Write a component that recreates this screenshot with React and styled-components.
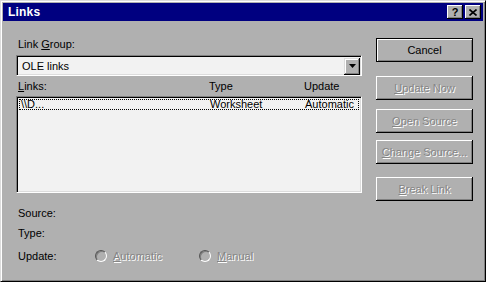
import React from "react";
import styled, { createGlobalStyle } from "styled-components";

const Global = createGlobalStyle`
	html, body {
		margin: 0;
		padding: 0;
		background: #b0b0b0;
	}
	body {
		font-family: "Liberation Sans", Arial, sans-serif;
		font-size: 11px;
		color: #000;
	}
`;

const Win = styled.div`
	width: 486px;
	height: 282px;
	box-sizing: border-box;
	background: #b0b0b0;
	border-top: 1px solid #dcdcdc;
	border-left: 1px solid #dcdcdc;
	border-right: 1px solid #000;
	border-bottom: 1px solid #000;
	box-shadow: inset 1px 1px 0 #fff, inset -1px -1px 0 #808080;
	padding: 2px;
	display: flex;
	flex-direction: column;
`;

const TitleBar = styled.div`
	height: 18px;
	background: #000080;
	display: flex;
	align-items: center;
	padding: 0 2px 0 5px;
	h1 {
		flex: 1;
		margin: 0;
		font-size: 12px;
		font-weight: bold;
		color: #fff;
		letter-spacing: 0.2px;
	}
`;

const CapBtn = styled.button`
	width: 16px;
	height: 14px;
	padding: 0;
	margin-left: ${(p) => p.$gap || 0}px;
	background: #b0b0b0;
	border: none;
	box-shadow: inset -1px -1px 0 #000, inset 1px 1px 0 #fff, inset -2px -2px 0 #808080;
	font-family: "Liberation Sans", Arial, sans-serif;
	font-size: 11px;
	font-weight: bold;
	line-height: 13px;
	display: flex;
	align-items: center;
	justify-content: center;
`;

const Body = styled.div`
	flex: 1;
	display: flex;
	padding: 17px 10px 0 13px;
	column-gap: 14px;
`;

const LeftCol = styled.div`
	width: 346px;
	display: flex;
	flex-direction: column;
`;

const Label = styled.div`
	height: 13px;
	line-height: 13px;
	margin-top: ${(p) => p.$mt || 0}px;
	padding-left: 2px;
`;

const Combo = styled.div`
	margin-top: 4px;
	height: 21px;
	box-sizing: border-box;
	background: #f2f2f2;
	border-top: 1px solid #808080;
	border-left: 1px solid #808080;
	border-right: 1px solid #fff;
	border-bottom: 1px solid #fff;
	box-shadow: inset 1px 1px 0 #000, inset -1px -1px 0 #dcdcdc;
	display: flex;
	align-items: center;
	padding: 2px 1px 1px 2px;
	span {
		flex: 1;
		padding-left: 3px;
	}
`;

const DropBtn = styled.div`
	width: 16px;
	height: 17px;
	background: #b0b0b0;
	box-shadow: inset -1px -1px 0 #000, inset 1px 1px 0 #dcdcdc, inset -2px -2px 0 #808080, inset 2px 2px 0 #fff;
	display: flex;
	align-items: center;
	justify-content: center;
`;

const Cols = styled.div`
	display: grid;
	grid-template-columns: 191px 95px 1fr;
	height: 13px;
	line-height: 13px;
	margin-top: ${(p) => p.$mt || 0}px;
	padding-left: 2px;
`;

const ListBox = styled.div`
	margin-top: 3px;
	height: 97px;
	box-sizing: border-box;
	background: #f2f2f2;
	border-top: 1px solid #808080;
	border-left: 1px solid #808080;
	border-right: 1px solid #fff;
	border-bottom: 1px solid #fff;
	box-shadow: inset 1px 1px 0 #000, inset -1px -1px 0 #dcdcdc;
	padding: 2px;
`;

const Row = styled(Cols)`
	height: 11px;
	line-height: 11px;
	padding-left: 2px;
	outline: 1px dotted #000;
	outline-offset: -1px;
	grid-template-columns: 189px 95px 1fr;
`;

const InfoRow = styled.div`
	display: flex;
	align-items: center;
	height: 13px;
	margin-top: ${(p) => p.$mt || 0}px;
	padding-left: 2px;
	& > span:first-child {
		width: 77px;
	}
`;

const Disabled = styled.span`
	color: #858585;
	text-shadow: 1px 1px 0 #fff;
`;

const Radio = styled.label`
	display: flex;
	align-items: center;
	width: ${(p) => p.$w}px;
	i {
		width: 12px;
		height: 12px;
		box-sizing: border-box;
		border-radius: 50%;
		border: 1px solid;
		border-color: #555 #fff #fff #555;
		margin-right: 6px;
		box-shadow: inset 1px 1px 0 #808080;
	}
`;

const RightCol = styled.div`
	width: 97px;
	display: flex;
	flex-direction: column;
`;

const Btn = styled.button`
	height: 24px;
	margin: ${(p) => p.$mt || 0}px 0 0 0;
	padding: 0;
	background: #b0b0b0;
	font-family: "Liberation Sans", Arial, sans-serif;
	font-size: 11px;
	border: none;
	color: ${(p) => (p.disabled ? "#858585" : "#000")};
	text-shadow: ${(p) => (p.disabled ? "1px 1px 0 #fff" : "none")};
	box-shadow: ${(p) =>
		p.$default
			? "inset 0 0 0 1px #000, inset 2px 2px 0 #fff, inset -2px -2px 0 #808080"
			: "inset -1px -1px 0 #000, inset 1px 1px 0 #fff, inset -2px -2px 0 #808080"};
`;

export default function App() {
	return (
		<>
			<Global />
			<Win>
				<TitleBar>
					<h1>Links</h1>
					<CapBtn>?</CapBtn>
					<CapBtn $gap={2}>
						<svg width="8" height="7" viewBox="0 0 8 7">
							<path d="M0.5 0.5L7.5 6.5M7.5 0.5L0.5 6.5" stroke="#000" strokeWidth="1.6" />
						</svg>
					</CapBtn>
				</TitleBar>
				<Body>
					<LeftCol>
						<Label>
							Link <u>G</u>roup:
						</Label>
						<Combo>
							<span>OLE links</span>
							<DropBtn>
								<svg width="7" height="4" viewBox="0 0 7 4">
									<path d="M0 0H7L3.5 4Z" fill="#000" />
								</svg>
							</DropBtn>
						</Combo>
						<Cols $mt={4}>
							<span>
								<u>L</u>inks:
							</span>
							<span>Type</span>
							<span>Update</span>
						</Cols>
						<ListBox>
							<Row>
								<span>\\D...</span>
								<span>Worksheet</span>
								<span>Automatic</span>
							</Row>
						</ListBox>
						<InfoRow $mt={13}>
							<span>Source:</span>
						</InfoRow>
						<InfoRow $mt={7}>
							<span>Type:</span>
						</InfoRow>
						<InfoRow $mt={10}>
							<span>Update:</span>
							<Radio $w={104}>
								<i />
								<Disabled>
									<u>A</u>utomatic
								</Disabled>
							</Radio>
							<Radio>
								<i />
								<Disabled>
									<u>M</u>anual
								</Disabled>
							</Radio>
						</InfoRow>
					</LeftCol>
					<RightCol>
						<Btn $default>Cancel</Btn>
						<Btn $mt={14} disabled>
							<u>U</u>pdate Now
						</Btn>
						<Btn $mt={9} disabled>
							<u>O</u>pen Source
						</Btn>
						<Btn $mt={7} disabled>
							<u>C</u>hange Source...
						</Btn>
						<Btn $mt={13} disabled>
							<u>B</u>reak Link
						</Btn>
					</RightCol>
				</Body>
			</Win>
		</>
	);
}
